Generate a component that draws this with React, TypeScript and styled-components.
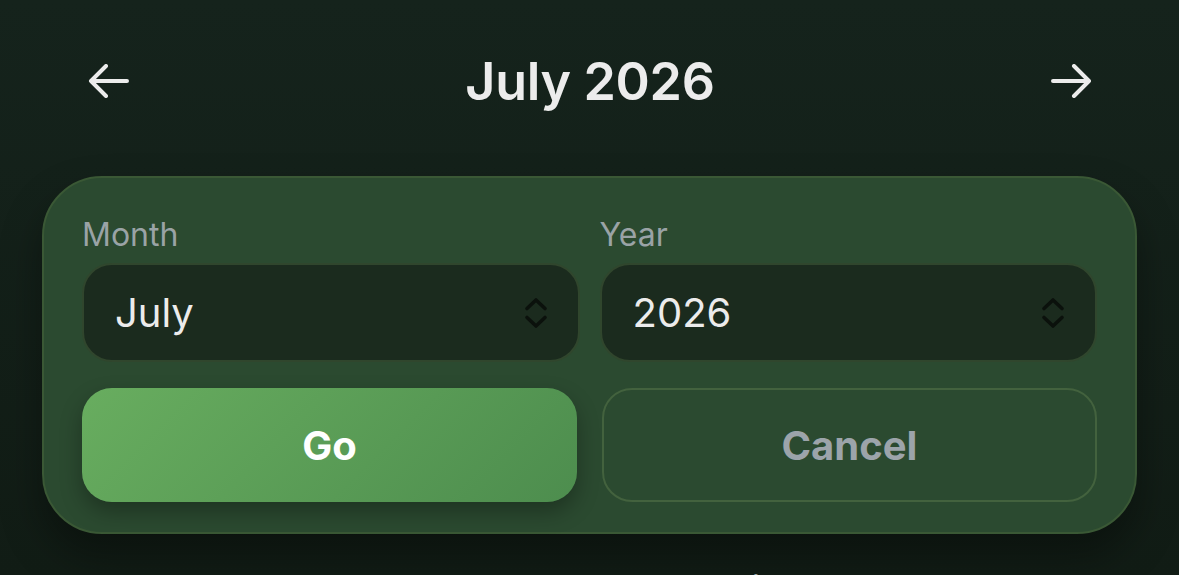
import styled, { createGlobalStyle } from 'styled-components'

const GlobalStyle = createGlobalStyle`
body{
    margin: 0;
    background: #14221b;
    font-family: Inter, "Noto Sans", "Liberation Sans", sans-serif;
}
`

const Page = styled.div`
width: 1179px;
height: 575px;
overflow: hidden;
box-sizing: border-box;
padding: 40px 42px 0;
background: linear-gradient(180deg, #15231c 0%, #111c15 100%);
`

const Header = styled.div`
height: 82px;
display: flex;
align-items: center;
justify-content: space-between;
padding: 0 45px 0 46px;
`

const NavButton = styled.button`
background: none;
border: none;
padding: 0;
width: 42px;
height: 34px;
display: flex;
align-items: center;
justify-content: center;
color: #ececec;
cursor: pointer;
`

const Title = styled.h1`
margin: 0;
font-size: 52px;
font-weight: 600;
color: #ececec;
letter-spacing: -0.3px;
`

const Card = styled.div`
margin-top: 54px;
background: #2b4a30;
border: 2px solid #3a5835;
border-radius: 60px;
padding: 36px 38px 30px;
box-shadow: 0 22px 40px rgba(0, 0, 0, 0.35);
`

const Fields = styled.div`
display: grid;
grid-template-columns: 1fr 1fr;
gap: 20px;
`

const Field = styled.div`
display: flex;
flex-direction: column;
>label{
    font-size: 32px;
    line-height: 42px;
    color: #9aa3a6;
    margin-bottom: 7px;
}
`

const Select = styled.div`
height: 99px;
box-sizing: border-box;
display: flex;
align-items: center;
justify-content: space-between;
padding: 0 30px 0 31px;
background: #1b2b1e;
border: 2px solid #30462d;
border-radius: 30px;
font-size: 40px;
color: #ececec;
`

const Actions = styled.div`
margin-top: 26px;
display: grid;
grid-template-columns: 1fr 1fr;
gap: 25px;
`

const ActionButton = styled.button<{ $primary?: boolean }>`
height: 114px;
border-radius: 30px;
font-family: inherit;
font-size: 40px;
font-weight: 700;
cursor: pointer;
color: ${p => p.$primary ? '#ffffff' : '#9ca4aa'};
background: ${p => p.$primary ? 'linear-gradient(135deg, #68ad5f 0%, #4d8d4e 100%)' : 'transparent'};
border: ${p => p.$primary ? 'none' : '2px solid #43623e'};
box-shadow: ${p => p.$primary ? '0 10px 22px rgba(0, 0, 0, 0.3)' : 'none'};
`

const Weekdays = styled.div`
margin-top: 34px;
display: grid;
grid-template-columns: repeat(7, 1fr);
padding: 0 12px 0 4px;
>span{
    text-align: center;
    font-size: 34px;
    line-height: 40px;
    color: #9aa3a6;
}
`

const ArrowIcon = ({ dir }: { dir: 'left' | 'right' }) => (
    <svg width="42" height="34" viewBox="0 0 42 34" fill="none" stroke="currentColor" strokeWidth="4" strokeLinecap="round" strokeLinejoin="round">
        {dir === 'left'
            ? <path d="M39 17H3M18 2L3 17l15 15" />
            : <path d="M3 17h36M24 2l15 15-15 15" />}
    </svg>
)

const UpDownIcon = () => (
    <svg width="24" height="32" viewBox="0 0 24 32" fill="none" stroke="#0b110c" strokeWidth="3.6" strokeLinecap="round" strokeLinejoin="round">
        <path d="M3 11.5L12 3l9 8.5" />
        <path d="M3 20.5l9 8.5 9-8.5" />
    </svg>
)

const days = ['Mon', 'Tue', 'Wed', 'Thu', 'Fri', 'Sat', 'Sun']

const App = () => {
    return (
        <>
            <GlobalStyle />
            <Page>
                <Header>
                    <NavButton aria-label="Previous month"><ArrowIcon dir="left" /></NavButton>
                    <Title>July 2026</Title>
                    <NavButton aria-label="Next month"><ArrowIcon dir="right" /></NavButton>
                </Header>
                <Card>
                    <Fields>
                        <Field>
                            <label>Month</label>
                            <Select>July<UpDownIcon /></Select>
                        </Field>
                        <Field>
                            <label>Year</label>
                            <Select>2026<UpDownIcon /></Select>
                        </Field>
                    </Fields>
                    <Actions>
                        <ActionButton $primary>Go</ActionButton>
                        <ActionButton>Cancel</ActionButton>
                    </Actions>
                </Card>
                <Weekdays>
                    {days.map(d => <span key={d}>{d}</span>)}
                </Weekdays>
            </Page>
        </>
    )
}

export default App
